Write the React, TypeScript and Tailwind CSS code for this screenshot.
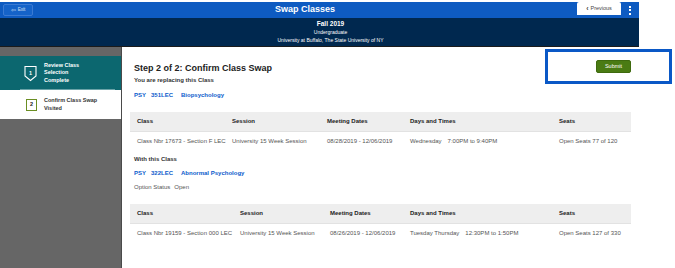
import React from 'react'

const FONT = { fontFamily: '"Liberation Sans", Arial, sans-serif' }

type Row = { cls: string; session: string; dates: string; days: string; times: string; seats: string }

function ClassTable({ cols, row }: { cols: string; row: Row }) {
  const heads = ['Class', 'Session', 'Meeting Dates', 'Days and Times', 'Seats']
  return (
    <div className="w-[501px] ml-[8px]">
      <div className={`grid ${cols} h-[20px] items-center bg-[#eeeeee] border-b border-[#e2e2e2] text-[6px] font-bold text-[#222]`}>
        {heads.map(h => <div key={h} className="pl-[7px]">{h}</div>)}
      </div>
      <div className={`grid ${cols} h-[18px] items-center text-[6px] text-[#555]`}>
        <div className="pl-[7px] whitespace-nowrap">{row.cls}</div>
        <div className="pl-[7px] whitespace-nowrap">{row.session}</div>
        <div className="pl-[7px] whitespace-nowrap">{row.dates}</div>
        <div className="pl-[7px] whitespace-nowrap">{row.days}<span className="ml-[6px]">{row.times}</span></div>
        <div className="pl-[7px] whitespace-nowrap">{row.seats}</div>
      </div>
    </div>
  )
}

export default function App() {
  return (
    <div className="w-[675px] h-[268px] overflow-hidden bg-white flex flex-col" style={FONT}>
      {/* header */}
      <div className="w-[639px] mt-[2px] shrink-0">
        <div className="h-[16px] bg-[#0e5bc1] flex items-center relative">
          <div className="ml-[3px] h-[12px] w-[30px] rounded-[2px] border border-[#3a7ad3] bg-[#1563c9] flex items-center justify-center gap-[2px] text-[4.5px] text-white/80">
            <span className="text-[6px] leading-none">⇦</span>Exit
          </div>
          <div className="flex-1 text-center text-[9px] font-bold text-white">Swap Classes</div>
          <div className="h-[13px] w-[44px] -mt-[3px] bg-white rounded-t-[2px] flex items-center justify-center gap-[2px] text-[5.5px] text-[#444]">
            <span className="text-[7px] leading-none font-bold">‹</span>Previous
          </div>
          <div className="w-[18px] flex flex-col items-center gap-[1.5px]">
            <span className="w-[2px] h-[2px] bg-white" />
            <span className="w-[2px] h-[2px] bg-white" />
            <span className="w-[2px] h-[2px] bg-white" />
          </div>
        </div>
        <div className="h-[28px] bg-[#00284f] flex flex-col items-center justify-center pl-[22px] text-white leading-[8px]">
          <div className="text-[6.5px] font-bold">Fall 2019</div>
          <div className="text-[5px]">Undergraduate</div>
          <div className="text-[5px]">University at Buffalo, The State University of NY</div>
        </div>
        <div className="h-[1px] bg-[#1b1b1b]" />
      </div>

      <div className="flex flex-1">
        {/* sidebar */}
        <div className="w-[122px] bg-[#666666] border-r border-[#4a4a4a] flex flex-col pt-[9px]">
          <div className="h-[34px] bg-[#0c676f] flex items-center relative">
            <svg width="13" height="17" viewBox="0 0 13 17" className="ml-[24px]">
              <path d="M1 1.5 H12 V11 L6.5 15.5 L1 11 Z" fill="none" stroke="white" strokeWidth="1.1" />
              <text x="6.5" y="10" textAnchor="middle" fontSize="5.5" fontWeight="bold" fill="white" style={FONT}>1</text>
            </svg>
            <div className="ml-[7px] text-[5.5px] font-bold text-white leading-[7.5px]">
              <div>Review Class</div>
              <div>Selection</div>
              <div>Complete</div>
            </div>
            <div className="absolute bottom-0 left-[20px] right-[6px] h-[1px] bg-[#6aa3a8]" />
          </div>
          <div className="h-[29px] bg-white flex items-center">
            <div className="ml-[26px] w-[11px] h-[12px] border border-[#6b8e23] flex items-center justify-center text-[5.5px] font-bold text-[#222]">2</div>
            <div className="ml-[7px] text-[5.5px] font-bold text-[#333] leading-[7.5px]">
              <div>Confirm Class Swap</div>
              <div>Visited</div>
            </div>
          </div>
        </div>

        {/* main */}
        <div className="flex-1 flex flex-col">
          <div className="flex justify-between">
            <div className="pl-[12px] pt-[15px]">
              <div className="text-[9px] font-bold text-[#222] leading-[12px]">Step 2 of 2: Confirm Class Swap</div>
              <div className="mt-[2px] text-[6px] font-bold text-[#333] leading-[8px]">You are replacing this Class</div>
              <div className="mt-[7px] text-[6px] font-bold text-[#0b5ccc] leading-[8px] flex gap-[5px]">
                <span>PSY</span><span>351LEC</span><span className="ml-[3px]">Biopsychology</span>
              </div>
            </div>
            <div className="mt-[2px] mr-[3px] w-[127px] h-[35px] border-[3px] border-[#0a58c6] flex items-center justify-center pl-[10px]">
              <div className="w-[35px] h-[13px] rounded-[2px] bg-[#4a7b13] border border-[#3e6a0e] flex items-center justify-center text-[5.5px] text-white">Submit</div>
            </div>
          </div>

          <div className="mt-[13px]">
            <ClassTable
              cols="grid-cols-[95px_95px_83px_149px_79px]"
              row={{ cls: 'Class Nbr 17673 - Section F LEC', session: 'University 15 Week Session', dates: '08/28/2019 - 12/06/2019', days: 'Wednesday', times: '7:00PM to 9:40PM', seats: 'Open Seats 77 of 120' }}
            />
          </div>

          <div className="pl-[12px]">
            <div className="mt-[5px] text-[6px] font-bold text-[#333] leading-[8px]">With this Class</div>
            <div className="mt-[6px] text-[6px] font-bold text-[#0b5ccc] leading-[8px] flex gap-[5px]">
              <span>PSY</span><span>322LEC</span><span className="ml-[3px]">Abnormal Psychology</span>
            </div>
            <div className="mt-[6px] text-[6px] text-[#555] leading-[8px]">Option Status<span className="ml-[4px]">Open</span></div>
          </div>

          <div className="mt-[13px]">
            <ClassTable
              cols="grid-cols-[103px_90px_80px_149px_79px]"
              row={{ cls: 'Class Nbr 19159 - Section 000 LEC', session: 'University 15 Week Session', dates: '08/26/2019 - 12/06/2019', days: 'Tuesday Thursday', times: '12:30PM to 1:50PM', seats: 'Open Seats 127 of 330' }}
            />
          </div>
        </div>
      </div>
    </div>
  )
}
